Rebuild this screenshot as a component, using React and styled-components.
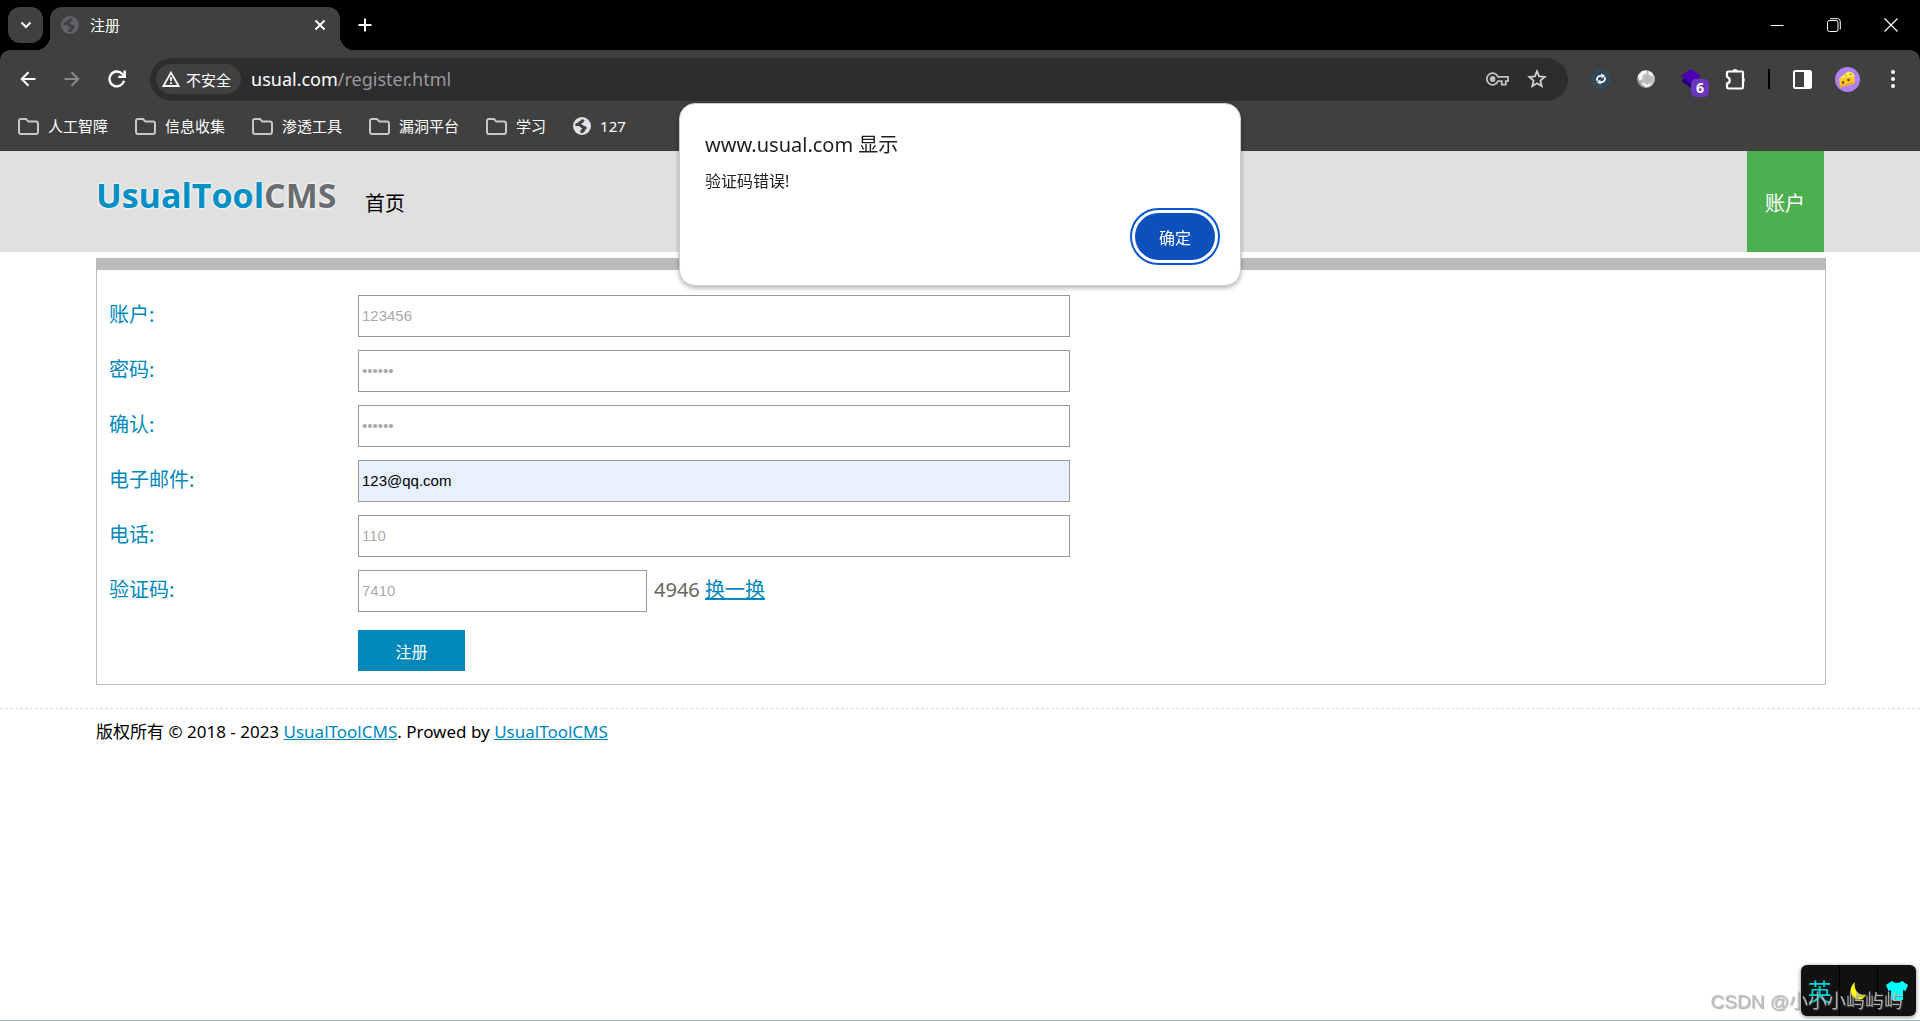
import React, { useState } from 'react'
import styled, { createGlobalStyle } from 'styled-components'

const folders = ['人工智障', '信息收集', '渗透工具', '漏洞平台', '学习']

const fields = [
  { id: 'username', label: '账户:', type: 'text', hint: '123456' },
  { id: 'password', label: '密码:', type: 'password', hint: '••••••' },
  { id: 'confirm', label: '确认:', type: 'password', hint: '••••••' },
  { id: 'email', label: '电子邮件:', type: 'text', hint: '' },
  { id: 'phone', label: '电话:', type: 'text', hint: '110' },
]

const Globe = ({ color, hole }) => (
  <svg width="18" height="18" viewBox="0 0 18 18">
    <circle cx="9" cy="9" r="9" fill={color} />
    <path
      d="M9.5 2.2c-1.6 0-2 .8-1.8 1.7l-1.8.4c-.8.3-.4 1.6-1.4 1.8-1 .1-1.6.2-2.2 1.2-.4 3 1.5 1.4 3.6 1.8 1.2.2 1.2 1.7 2.6 1.8 1.2.2.7 1.3-.3 1.5-1.2.3-.5 1.6-.9 3.4 3 .6 4.3-.4 4.6-2.2.1-1 1.4-.9 1.7-2 .5-1.6-.8-2.8-2.5-2.7-1-.1-.9-1.2-2-1.2-1.2 0-1.2-1.4-.1-1.5 1.2 0 1.6-.5 1.5-1.4.1-1 1.1-.7 1.2-1.6z"
      fill={hole}
    />
  </svg>
)

const Folder = () => (
  <svg width="21" height="17" viewBox="0 0 21 17" fill="none" stroke="#c7c7c7" strokeWidth="2">
    <path d="M1 3q0-2 2-2h5l2.4 2.6H18q2 0 2 2V14q0 2-2 2H3q-2 0-2-2z" />
  </svg>
)

const App = () => {
  const [email, setEmail] = useState('123@qq.com')

  return (
    <>
      <GlobalStyle />
      <Browser>
        <TabStrip>
          <TabSearch aria-label="搜索标签页">
            <svg width="12" height="8" viewBox="0 0 12 8" fill="none" stroke="#fff" strokeWidth="2">
              <path d="M1.5 1.5 6 6l4.5-4.5" />
            </svg>
          </TabSearch>
          <Tab>
            <Globe color="#5f6368" hole="#404040" />
            <TabTitle>注册</TabTitle>
            <IconButton aria-label="关闭标签页">
              <svg width="12" height="12" viewBox="0 0 12 12" stroke="#fff" strokeWidth="2">
                <path d="M1.5 1.5l9 9M10.5 1.5l-9 9" />
              </svg>
            </IconButton>
          </Tab>
          <NewTab aria-label="新标签页">
            <svg width="14" height="14" viewBox="0 0 14 14" stroke="#fff" strokeWidth="2">
              <path d="M7 .5v13M.5 7h13" />
            </svg>
          </NewTab>
          <WindowButtons>
            <IconButton aria-label="最小化">
              <svg width="14" height="14" viewBox="0 0 14 14" stroke="#fff">
                <path d="M.5 7.5h13" />
              </svg>
            </IconButton>
            <IconButton aria-label="还原">
              <svg width="14" height="14" viewBox="0 0 14 14" fill="none" stroke="#fff">
                <rect x="0.5" y="2.5" width="10.5" height="11" rx="2" />
                <path d="M3 .7h7.5q2.8 0 2.8 2.8v8" />
              </svg>
            </IconButton>
            <IconButton aria-label="关闭">
              <svg width="14" height="14" viewBox="0 0 14 14" stroke="#fff" strokeWidth="1.2">
                <path d="M.5.5l13 13M13.5.5l-13 13" />
              </svg>
            </IconButton>
          </WindowButtons>
        </TabStrip>

        <Toolbar>
          <NavButtons>
            <IconButton aria-label="后退">
              <svg width="16" height="16" viewBox="0 0 16 16" fill="none" stroke="#fff" strokeWidth="2">
                <path d="M15.5 8H2M8.5 1.2 1.7 8l6.8 6.8" />
              </svg>
            </IconButton>
            <IconButton aria-label="前进">
              <svg width="16" height="16" viewBox="0 0 16 16" fill="none" stroke="#8a8a8a" strokeWidth="2">
                <path d="M.5 8H14M7.5 1.2 14.3 8l-6.8 6.8" />
              </svg>
            </IconButton>
            <IconButton aria-label="重新加载">
              <svg width="18" height="18" viewBox="0 0 17 17" fill="none" stroke="#fff" strokeWidth="2.2">
                <path d="M15.2 10.2a7 7 0 1 1-1.6-6.5L15.5 6" />
                <path d="M15.8.5v6h-6" />
              </svg>
            </IconButton>
          </NavButtons>
          <AddressBar>
            <Chip>
              <svg width="18" height="16" viewBox="0 0 18 16" fill="none" stroke="#fff" strokeWidth="1.8">
                <path d="M9 1.6 16.6 15H1.4z" />
                <path d="M9 6v4M9 11.3v1.8" />
              </svg>
              不安全
            </Chip>
            <Url>
              usual.com<span>/register.html</span>
            </Url>
            <IconButton aria-label="密码">
              <svg width="23" height="14" viewBox="0 0 23 14" fill="none" stroke="#c0c0c0" strokeWidth="1.8">
                <path d="M12 4.8A5.8 5.8 0 1 0 12 9.2h3.8v3.5h4V9.2h2.2V4.8z" />
                <circle cx="6.6" cy="7" r="2" fill="#c0c0c0" />
              </svg>
            </IconButton>
            <IconButton aria-label="为此网页添加书签">
              <svg width="20" height="20" viewBox="0 0 20 20" fill="none" stroke="#d0d0d0" strokeWidth="1.8">
                <path d="M10 2.2l2.1 5.2 5.6.5-4.3 3.7 1.3 5.5-4.7-2.9-4.7 2.9 1.3-5.5L2.3 7.9l5.6-.5z" />
              </svg>
            </IconButton>
          </AddressBar>
          <Extensions>
            <ToolButton aria-label="代理">
              <svg width="20" height="20" viewBox="0 0 20 20" fill="none">
                <circle cx="10" cy="10" r="8.5" fill="#2f4858" stroke="#245a76" />
                <path d="M6.5 12c-1.5-3 .5-5.5 4-5M13.5 8c1.5 3-.5 5.5-4 5" stroke="#fff" strokeWidth="1.8" />
                <path d="M10 4.5l4 2-3.2 3zM10 15.5l-4-2 3.2-3z" fill="#fff" />
              </svg>
            </ToolButton>
            <ToolButton aria-label="地球">
              <svg width="20" height="20" viewBox="0 0 20 20">
                <defs>
                  <radialGradient id="ball" cx="60%" cy="50%">
                    <stop offset="0" stopColor="#b5b5b5" />
                    <stop offset=".7" stopColor="#c4c4c4" />
                    <stop offset="1" stopColor="#999" />
                  </radialGradient>
                </defs>
                <circle cx="10" cy="10" r="9" fill="url(#ball)" />
                <path d="M2 6.5 6 2l5-.5-1 3-3 1.5-1 4-2.5 2-1-2.5zM12 2l4 2 2 4-3-1.5-2-1zM5 14.5l3-.5 3 2 4-2.5-1 3.5-4 1.5z" fill="#f7f7f7" />
              </svg>
            </ToolButton>
            <ToolButton aria-label="图层">
              <svg width="22" height="20" viewBox="0 0 22 20">
                <path d="M1 12l4-3 6 4 6-4 4 3-10 7z" fill="#200070" />
                <path d="M11 0l10 7-10 7.5L1 7z" fill="#4a00b4" />
              </svg>
              <Badge>6</Badge>
            </ToolButton>
            <ToolButton aria-label="扩展程序">
              <svg width="22" height="22" viewBox="0 0 22 22" fill="none" stroke="#fff" strokeWidth="2.2">
                <path d="M2 4.5Q2 3.5 3 3.5h14q1 0 1 1V19q0 1.5-1.2 1.5H3.2Q2 20.5 2 19v-3.6q2.7-.3 2.7-3T2 9z" strokeLinejoin="round" />
                <path d="M7.5 3.5a2.6 2.6 0 0 1 5.2 0zM18 9.5a2.6 2.6 0 0 1 0 5z" fill="#fff" strokeWidth="0" />
              </svg>
            </ToolButton>
            <Divider />
            <ToolButton aria-label="侧边栏">
              <svg width="19" height="19" viewBox="0 0 19 19">
                <rect x="1" y="1" width="17" height="17" rx="1.5" fill="none" stroke="#fff" strokeWidth="2" />
                <path d="M11 1h7v17h-7z" fill="#fff" />
              </svg>
            </ToolButton>
            <ToolButton aria-label="个人资料">
              <svg width="25" height="25" viewBox="0 0 25 25">
                <circle cx="12.5" cy="12.5" r="12.5" fill="#ad82f5" />
                <path d="M4 11.5 13 4.5q6.5.5 6.7 5.5z" fill="#fff04a" />
                <path d="M4 11.5l15.7-2v7L5 20.5z" fill="#fcc62d" />
                <path d="M19.5 14.8v2L5 20.6l-.2-2.2z" fill="#f5a623" />
                <circle cx="8" cy="15.5" r="1.3" fill="#68440f" />
                <circle cx="13.5" cy="13" r="1.3" fill="#68440f" />
                <circle cx="15.5" cy="7.5" r="1" fill="#a57617" />
                <circle cx="11" cy="8.5" r="1" fill="#d39b18" />
              </svg>
            </ToolButton>
            <ToolButton aria-label="菜单">
              <svg width="4" height="18" viewBox="0 0 4 18" fill="#fff">
                <circle cx="2" cy="2" r="2" />
                <circle cx="2" cy="9" r="2" />
                <circle cx="2" cy="16" r="2" />
              </svg>
            </ToolButton>
          </Extensions>
        </Toolbar>

        <Bookmarks>
          {folders.map((name) => (
            <Bookmark href="#" key={name}>
              <Folder />
              {name}
            </Bookmark>
          ))}
          <Bookmark href="#">
            <Globe color="#dfe1e5" hole="#404040" />
            127
          </Bookmark>
        </Bookmarks>
      </Browser>

      <Header>
        <HeaderInner>
          <Logo href="#">
            UsualTool<span>CMS</span>
          </Logo>
          <HomeLink href="#">首页</HomeLink>
          <AccountLink href="#">账户</AccountLink>
        </HeaderInner>
      </Header>

      <Panel onSubmit={(e) => e.preventDefault()}>
        {fields.map((f) => (
          <Row key={f.id}>
            <Label htmlFor={f.id}>{f.label}</Label>
            <Field>
              {f.id === 'email' ? (
                <Input id={f.id} type={f.type} value={email} $filled onChange={(e) => setEmail(e.target.value)} />
              ) : (
                <Input id={f.id} type={f.type} placeholder={f.hint} />
              )}
            </Field>
          </Row>
        ))}
        <Row>
          <Label htmlFor="code">验证码:</Label>
          <Field>
            <Input id="code" type="text" placeholder="7410" $short />
            <Code>
              4946 <TextLink href="#">换一换</TextLink>
            </Code>
          </Field>
        </Row>
        <Actions>
          <Submit type="submit">注册</Submit>
        </Actions>
      </Panel>

      <Footer>
        版权所有 © 2018 - 2023 <TextLink href="#">UsualToolCMS</TextLink>. Prowed by{' '}
        <TextLink href="#">UsualToolCMS</TextLink>
      </Footer>

      <Dialog role="alertdialog" aria-labelledby="alert-title">
        <DialogTitle id="alert-title">www.usual.com 显示</DialogTitle>
        <DialogText>验证码错误!</DialogText>
        <DialogButton type="button">确定</DialogButton>
      </Dialog>

      <Ime>
        <ImeCell>英</ImeCell>
        <ImeCell>
          <svg width="17" height="18" viewBox="0 0 17 18">
            <path d="M5 0C-1 5-1 13 5 16.5c5 2.500 9 .5 11-4C10 14.500 3 9 5 0z" fill="#ff0" />
          </svg>
        </ImeCell>
        <ImeCell>
          <svg width="22" height="19" viewBox="0 0 22 19">
            <path d="M6 0q5 4 10 0l6 4-2.5 6-2.5-1v10H5V9l-2.5 1L0 4z" fill="#0ff" />
          </svg>
        </ImeCell>
      </Ime>
      <Watermark>CSDN @小小小屿屿屿</Watermark>
    </>
  )
}

const GlobalStyle = createGlobalStyle`
  * {
    box-sizing: border-box;
  }
  body {
    margin: 0;
    min-height: 100vh;
    background: #fff;
    border-bottom: 1px solid #9fbfbd;
    font-family: 'Noto Sans', 'Noto Sans CJK SC', sans-serif;
    font-size: 16px;
    color: #000;
  }
  button {
    font-family: inherit;
    border: 0;
    padding: 0;
    cursor: pointer;
  }
  a {
    text-decoration: none;
  }
  svg {
    display: block;
    flex-shrink: 0;
  }
`

const Browser = styled.div`
  background: #000;
  color: #fff;
  font-size: 15px;
`

const TabStrip = styled.div`
  display: flex;
  align-items: flex-start;
  height: 50px;
  padding: 7px 22px 0 8px;
`

const IconButton = styled.button`
  display: flex;
  align-items: center;
  justify-content: center;
  background: none;
`

const TabSearch = styled(IconButton)`
  width: 35px;
  height: 36px;
  margin-right: 7px;
  border-radius: 12px;
  background: #404040;
`

const Tab = styled.div`
  position: relative;
  display: flex;
  align-items: center;
  gap: 11px;
  width: 290px;
  height: 43px;
  padding: 0 14px 7px 11px;
  border-radius: 12px 12px 0 0;
  background: #404040;

  &::before,
  &::after {
    content: '';
    position: absolute;
    bottom: 0;
    width: 14px;
    height: 14px;
  }
  &::before {
    right: 100%;
    background: radial-gradient(circle at 0 0, transparent 14px, #404040 14px);
  }
  &::after {
    left: 100%;
    background: radial-gradient(circle at 100% 0, transparent 14px, #404040 14px);
  }
`

const TabTitle = styled.span`
  flex: 1;
  line-height: 20px;
`

const NewTab = styled(IconButton)`
  height: 36px;
  margin-left: 18px;
`

const WindowButtons = styled.div`
  display: flex;
  align-items: center;
  gap: 43px;
  height: 36px;
  margin-left: auto;
`

const Toolbar = styled.div`
  display: flex;
  align-items: center;
  height: 58px;
  padding: 0 5px 0 20px;
  border-radius: 10px 10px 0 0;
  background: #404040;
`

const NavButtons = styled.div`
  display: flex;
  align-items: center;
  gap: 28px;
  width: 130px;
`

const AddressBar = styled.div`
  display: flex;
  flex: 1;
  align-items: center;
  gap: 18px;
  height: 43px;
  padding: 0 21px 0 6px;
  border-radius: 22px;
  background: #2d2d30;
`

const Chip = styled.div`
  display: flex;
  align-items: center;
  gap: 6px;
  height: 30px;
  margin-right: -8px;
  padding: 0 10px 0 6px;
  border-radius: 15px;
  background: #404040;
`

const Url = styled.div`
  flex: 1;
  font-size: 18px;
  line-height: 24px;

  span {
    color: #9a9a9a;
  }
`

const Extensions = styled.div`
  display: flex;
  align-items: center;
  margin-left: 10px;
`

const ToolButton = styled(IconButton)`
  position: relative;
  width: 45px;
`

const Badge = styled.span`
  position: absolute;
  left: 23px;
  top: 10px;
  width: 18px;
  height: 18px;
  border-radius: 5px;
  background: #6936bd;
  color: #fff;
  font-size: 14px;
  font-weight: 700;
  line-height: 18px;
`

const Divider = styled.div`
  width: 2px;
  height: 20px;
  margin: 0 10px;
  background: #000;
`

const Bookmarks = styled.nav`
  display: flex;
  align-items: center;
  gap: 27px;
  height: 43px;
  padding: 0 18px 7px;
  background: #404040;
`

const Bookmark = styled.a`
  display: flex;
  align-items: center;
  gap: 9px;
  color: #fff;
  line-height: 20px;
`

const Header = styled.header`
  background: #e0e0e0;
`

const HeaderInner = styled.div`
  display: flex;
  width: 90%;
  height: 101px;
  margin: 0 auto;
  font-size: 20px;
`

const Logo = styled.a`
  width: 240px;
  padding-top: 24px;
  color: #0090c5;
  font-family: 'Open Sans', sans-serif;
  font-size: 34px;
  font-weight: 700;
  line-height: 40px;
  text-shadow: 0 0 2px #fff, 0 0 3px #fff;
  white-space: nowrap;

  span {
    color: #6a6d70;
  }
`

const HomeLink = styled.a`
  margin-left: 29px;
  padding-top: 4px;
  color: #000;
  line-height: 97px;
`

const AccountLink = styled.a`
  margin-left: auto;
  padding: 4px 19px 0 18px;
  background: #4caf50;
  color: #fff;
  line-height: 97px;
`

const Panel = styled.form`
  box-sizing: content-box;
  width: 90%;
  margin: 6px 0 0 5%;
  padding: 25px 0 13px;
  border: 1px solid #bbb;
  border-top-width: 12px;
`

const Row = styled.div`
  display: flex;
  margin: 0 13px 13px 12px;
`

const Label = styled.label`
  flex: 0 0 249px;
  color: #0088bb;
  font-size: 20px;
  line-height: 40px;
`

const Field = styled.div`
  display: flex;
  flex: 1;
`

const Input = styled.input`
  width: ${(p) => (p.$short ? '289px' : '49%')};
  height: 42px;
  padding: 1px 3px 2px;
  border: 1px solid #999;
  border-radius: 0;
  background: ${(p) => (p.$filled ? '#e8f0fe' : '#fff')};
  color: #000;
  font-family: 'Liberation Sans', sans-serif;
  font-size: 15px;

  &::placeholder {
    color: #aaa;
  }
`

const Code = styled.span`
  margin-left: 7px;
  color: #666;
  font-size: 20px;
  line-height: 40px;
`

const TextLink = styled.a`
  color: #0088bb;
  text-decoration: underline;
`

const Actions = styled.div`
  margin: 18px 13px 0 261px;
`

const Submit = styled.button`
  display: block;
  width: 107px;
  height: 41px;
  background: #0088bb;
  color: #fff;
  font-size: 16px;
`

const Footer = styled.footer`
  margin-top: 23px;
  padding: 11px 5%;
  border-top: 1px dashed #ddd;
  font-size: 17px;
  line-height: 24px;
`

const Dialog = styled.div`
  position: fixed;
  top: 103px;
  left: 50%;
  display: flex;
  flex-direction: column;
  width: 562px;
  padding: 26px 25px 25px;
  border: 1px solid #ccc;
  border-radius: 16px;
  background: #fff;
  color: #1f1f1f;
  box-shadow: 0 2px 5px rgba(0, 0, 0, 0.3);
  transform: translateX(-50%);
`

const DialogTitle = styled.h1`
  margin: 0;
  font-size: 20px;
  font-weight: 400;
  line-height: 30px;
`

const DialogText = styled.p`
  margin: 9px 0 20px;
  line-height: 24px;
`

const DialogButton = styled.button`
  align-self: flex-end;
  width: 80px;
  height: 47px;
  border-radius: 24px;
  background: #0b50bb;
  color: #fff;
  font-size: 16px;
  outline: 2px solid #0b57d0;
  outline-offset: 3px;
`

const Ime = styled.div`
  position: fixed;
  right: 4px;
  bottom: 5px;
  display: flex;
  width: 115px;
  height: 51px;
  border-radius: 6px;
  background: #111;
  box-shadow: 0 1px 4px rgba(0, 0, 0, 0.5);
`

const ImeCell = styled.div`
  display: flex;
  flex: 1;
  align-items: center;
  justify-content: center;
  border-right: 1px solid #000;
  color: #00d5da;
  font-size: 24px;

  &:last-child {
    border-right: 0;
  }
`

const Watermark = styled.div`
  position: fixed;
  right: 17px;
  bottom: 6px;
  color: rgba(190, 190, 190, 0.9);
  font-family: 'Liberation Sans', 'Noto Sans CJK SC', sans-serif;
  font-size: 19px;
  line-height: 26px;
  text-shadow: 1px 1px 1px rgba(90, 90, 90, 0.5);
`

export default App
